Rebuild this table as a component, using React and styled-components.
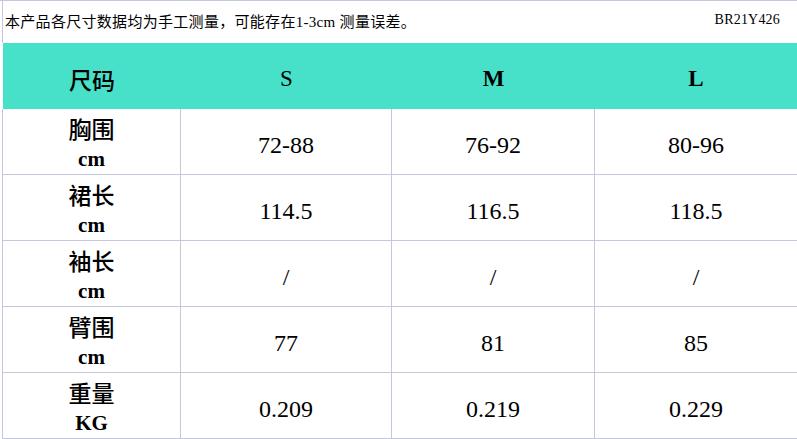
import React from "react";
import styled, { createGlobalStyle } from "styled-components";

const GRID = "#C4C8DC";
const TEAL = "#47E1C9";

const Global = createGlobalStyle`
  html, body { margin: 0; padding: 0; background: #fff; }
  body { font-family: "Noto Sans CJK SC", "Liberation Serif", serif; color: #000; }
  * { box-sizing: border-box; }
`;

const Sheet = styled.div`
  width: 797px;
  height: 439px;
  overflow: hidden;
  border-top: 1px solid ${GRID};
  padding-left: 2px;
  display: flex;
  flex-direction: column;
`;

const NoteRow = styled.div`
  height: 42px;
  display: flex;
  align-items: center;
  justify-content: space-between;
  border-left: 1px solid ${GRID};
  padding: 0 17px 3px 2px;
`;

const Note = styled.span`
  font-family: "Noto Sans CJK SC", sans-serif;
  font-size: 15px;
  letter-spacing: 0.3px;
`;

const Latin = styled.span`
  font-family: "Liberation Serif", serif;
  font-size: 15px;
`;

const Code = styled.span`
  font-family: "Liberation Serif", serif;
  font-size: 14px;
  letter-spacing: 0.2px;
`;

const Row = styled.div`
  display: grid;
  grid-template-columns: 178px 211px 203px 1fr;
  height: ${(p) => (p.$head ? 67 : 66)}px;
  background: ${(p) => (p.$head ? TEAL : "#fff")};
  border-left: 1px solid ${(p) => (p.$head ? "#fff" : GRID)};
  border-bottom: ${(p) => (p.$head ? "none" : `1px solid ${GRID}`)};
`;

const Cell = styled.div`
  display: flex;
  flex-direction: column;
  align-items: center;
  justify-content: center;
  padding-top: ${(p) => (p.$head ? 6 : 4)}px;
  border-right: ${(p) => (p.$head || p.$last ? "none" : `1px solid ${GRID}`)};
`;

const HeadLabel = styled.span`
  font-family: "Noto Sans CJK SC", sans-serif;
  font-size: 23px;
  font-weight: 500;
`;

const SizeName = styled.span`
  font-family: "Liberation Serif", serif;
  font-size: 23px;
  font-weight: ${(p) => (p.$bold ? 700 : 400)};
`;

const LabelCn = styled.span`
  font-family: "Noto Sans CJK SC", sans-serif;
  font-size: 23px;
  font-weight: 500;
  line-height: 31px;
`;

const LabelUnit = styled.span`
  font-family: "Liberation Serif", serif;
  font-size: 21px;
  font-weight: 700;
  line-height: 31px;
`;

const Value = styled.span`
  font-family: "Liberation Serif", serif;
  font-size: 24px;
  padding-top: 3px;
`;

const sizes = [
  { name: "S", bold: false },
  { name: "M", bold: true },
  { name: "L", bold: true },
];

const rows = [
  { cn: "胸围", unit: "cm", values: ["72-88", "76-92", "80-96"] },
  { cn: "裙长", unit: "cm", values: ["114.5", "116.5", "118.5"] },
  { cn: "袖长", unit: "cm", values: ["/", "/", "/"] },
  { cn: "臂围", unit: "cm", values: ["77", "81", "85"] },
  { cn: "重量", unit: "KG", values: ["0.209", "0.219", "0.229"] },
];

export default function App() {
  return (
    <>
      <Global />
      <Sheet>
        <NoteRow>
          <Note>
            本产品各尺寸数据均为手工测量，可能存在<Latin>1-3cm </Latin>测量误差。
          </Note>
          <Code>BR21Y426</Code>
        </NoteRow>
        <Row $head>
          <Cell $head>
            <HeadLabel>尺码</HeadLabel>
          </Cell>
          {sizes.map((s) => (
            <Cell $head key={s.name}>
              <SizeName $bold={s.bold}>{s.name}</SizeName>
            </Cell>
          ))}
        </Row>
        {rows.map((r) => (
          <Row key={r.cn}>
            <Cell>
              <LabelCn>{r.cn}</LabelCn>
              <LabelUnit>{r.unit}</LabelUnit>
            </Cell>
            {r.values.map((v, i) => (
              <Cell key={i} $last={i === 2}>
                <Value>{v}</Value>
              </Cell>
            ))}
          </Row>
        ))}
      </Sheet>
    </>
  );
}
